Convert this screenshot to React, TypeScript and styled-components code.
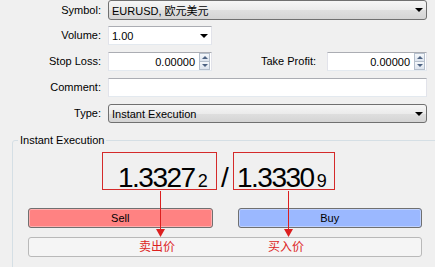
import React from 'react';
import styled, { createGlobalStyle } from 'styled-components';

const GlobalStyle = createGlobalStyle`
  html, body {
    margin: 0;
    padding: 0;
    background: #f0f0f0;
  }
  body {
    font-family: "Liberation Sans", Arial, "Noto Sans CJK SC", sans-serif;
    font-size: 11px;
    color: #000;
  }
`;

const Window = styled.div`
  position: relative;
  width: 435px;
  height: 267px;
  overflow: hidden;
  background: #f0f0f0;
`;

const Form = styled.div`
  display: flex;
  flex-direction: column;
  padding-right: 8px;
`;

const Row = styled.div`
  display: flex;
  align-items: flex-start;
  height: 26px;
`;

const Label = styled.label<{ $tall?: boolean }>`
  width: 101px;
  margin-right: 7px;
  text-align: right;
  line-height: ${p => (p.$tall ? 20 : 19)}px;
  white-space: nowrap;
`;

const SideLabel = styled(Label)`
  width: auto;
  margin-left: auto;
  margin-right: 11px;
`;

const Arrow = styled.span`
  flex: none;
  width: 0;
  height: 0;
  border-left: 4px solid transparent;
  border-right: 4px solid transparent;
  border-top: 4px solid #000;
`;

const Combo = styled.div<{ $tall?: boolean }>`
  flex: 1;
  display: flex;
  align-items: center;
  justify-content: space-between;
  box-sizing: border-box;
  height: ${p => (p.$tall ? 20 : 19)}px;
  padding: 0 3px 0 3px;
  border: 1px solid #707070;
  border-radius: 3px;
  background: linear-gradient(#f6f6f6 0%, #ebebeb 50%, #dfdfdf 50%, #d4d4d4 100%);
  font-family: "Liberation Sans", Arial, "Noto Sans CJK SC", sans-serif;
`;

const TextBox = styled.div<{ $width?: number }>`
  ${p => (p.$width ? `width: ${p.$width}px;` : 'flex: 1;')}
  display: flex;
  align-items: center;
  box-sizing: border-box;
  height: 19px;
  padding: 0 3px;
  border: 1px solid;
  border-color: #abadb3 #e2e3ea #e3e9ef #e2e3ea;
  background: #fff;
`;

const Value = styled.span<{ $right?: boolean }>`
  flex: 1;
  text-align: ${p => (p.$right ? 'right' : 'left')};
  padding-right: ${p => (p.$right ? 4 : 0)}px;
`;

const Spin = styled.div`
  display: flex;
  flex-direction: column;
  width: 11px;
  height: 17px;
  margin-right: -2px;
`;

const SpinButton = styled.div<{ $down?: boolean }>`
  flex: 1;
  display: flex;
  align-items: center;
  justify-content: center;
  border: 1px solid #b5bfcc;
  ${p => (p.$down ? 'border-top: none;' : '')}
  background: linear-gradient(#f5f8fb, #dde4ee);

  &::after {
    content: '';
    border-left: 3px solid transparent;
    border-right: 3px solid transparent;
    ${p => (p.$down ? 'border-top: 3px solid #4d6282;' : 'border-bottom: 3px solid #4d6282;')}
  }
`;

const Group = styled.fieldset`
  margin: 4px -20px 0 12px;
  padding: 5px 0 20px 15px;
  border: 1px solid #d5dfe5;
  border-radius: 3px;
  min-width: 0;
`;

const Legend = styled.legend`
  margin-left: -10px;
  padding: 0 2px;
  line-height: 13px;
`;

const Content = styled.div`
  width: 394px;
  display: flex;
  flex-direction: column;
`;

const PriceRow = styled.div`
  display: grid;
  grid-template-columns: 1fr 16px 1fr;
  align-items: start;
`;

const PriceBox = styled.div<{ $width: number; $pad: number; $side: 'start' | 'end' }>`
  justify-self: ${p => p.$side};
  box-sizing: border-box;
  width: ${p => p.$width}px;
  height: 38px;
  padding: 12px 0 0 ${p => p.$pad}px;
  border: 1px solid #d42a2a;
  font-size: 28px;
  line-height: 26px;
  letter-spacing: -1.5px;
  white-space: nowrap;
`;

const Pip = styled.span`
  font-size: 18px;
  letter-spacing: 0;
  margin-left: 3px;
`;

const Slash = styled.div`
  padding-top: 13px;
  text-align: center;
  font-size: 28px;
  line-height: 26px;
`;

const ButtonRow = styled.div`
  display: grid;
  grid-template-columns: 1fr 1fr;
  column-gap: 25px;
  margin-top: 17px;
`;

const TradeButton = styled.button<{ $color: string }>`
  box-sizing: border-box;
  height: 20px;
  padding: 0;
  border: 1px solid #707070;
  border-radius: 3px;
  background: ${p => p.$color};
  box-shadow: inset 0 0 0 1px rgba(255, 255, 255, 0.35);
  font-family: inherit;
  font-size: 11px;
  color: #000;
`;

const StatusBar = styled.div`
  box-sizing: border-box;
  height: 20px;
  margin-top: 9px;
  border: 1px solid #b9b9b9;
  border-radius: 3px;
  background: #f5f5f5;
`;

const Overlay = styled.svg`
  position: absolute;
  left: 0;
  top: 0;
  pointer-events: none;
`;

const Note = styled.span<{ $left: number }>`
  position: absolute;
  left: ${p => p.$left}px;
  top: 239px;
  font-family: "Noto Sans CJK SC", sans-serif;
  font-size: 12px;
  line-height: 14px;
  color: #dc1f1f;
`;

const App = () => {
  return (
    <>
      <GlobalStyle />
      <Window>
        <Form>
          <Row>
            <Label $tall>Symbol:</Label>
            <Combo $tall>
              <span>EURUSD, 欧元美元</span>
              <Arrow />
            </Combo>
          </Row>
          <Row>
            <Label>Volume:</Label>
            <TextBox $width={104}>
              <Value>1.00</Value>
              <Arrow />
            </TextBox>
          </Row>
          <Row>
            <Label>Stop Loss:</Label>
            <TextBox $width={104}>
              <Value $right>0.00000</Value>
              <Spin>
                <SpinButton />
                <SpinButton $down />
              </Spin>
            </TextBox>
            <SideLabel>Take Profit:</SideLabel>
            <TextBox $width={100}>
              <Value $right>0.00000</Value>
              <Spin>
                <SpinButton />
                <SpinButton $down />
              </Spin>
            </TextBox>
          </Row>
          <Row>
            <Label>Comment:</Label>
            <TextBox />
          </Row>
          <Row>
            <Label>Type:</Label>
            <Combo>
              <span>Instant Execution</span>
              <Arrow />
            </Combo>
          </Row>
        </Form>

        <Group>
          <Legend>Instant Execution</Legend>
          <Content>
            <PriceRow>
              <PriceBox $width={115} $pad={15} $side="end">
                1.3327<Pip>2</Pip>
              </PriceBox>
              <Slash>/</Slash>
              <PriceBox $width={102} $pad={3} $side="start">
                1.3330<Pip>9</Pip>
              </PriceBox>
            </PriceRow>
            <ButtonRow>
              <TradeButton $color="#ff8282">Sell</TradeButton>
              <TradeButton $color="#9bb8ff">Buy</TradeButton>
            </ButtonRow>
            <StatusBar />
          </Content>
        </Group>

        <Overlay width="435" height="267" viewBox="0 0 435 267">
          <g stroke="#dc1f1f" strokeWidth="1">
            <line x1="160.5" y1="191" x2="160.5" y2="229" />
            <line x1="288.5" y1="191" x2="288.5" y2="229" />
          </g>
          <g fill="#dc1f1f">
            <polygon points="156,229 165,229 160.5,237" />
            <polygon points="284,229 293,229 288.5,237" />
          </g>
        </Overlay>
        <Note $left={139}>卖出价</Note>
        <Note $left={268}>买入价</Note>
      </Window>
    </>
  );
};

export default App;
